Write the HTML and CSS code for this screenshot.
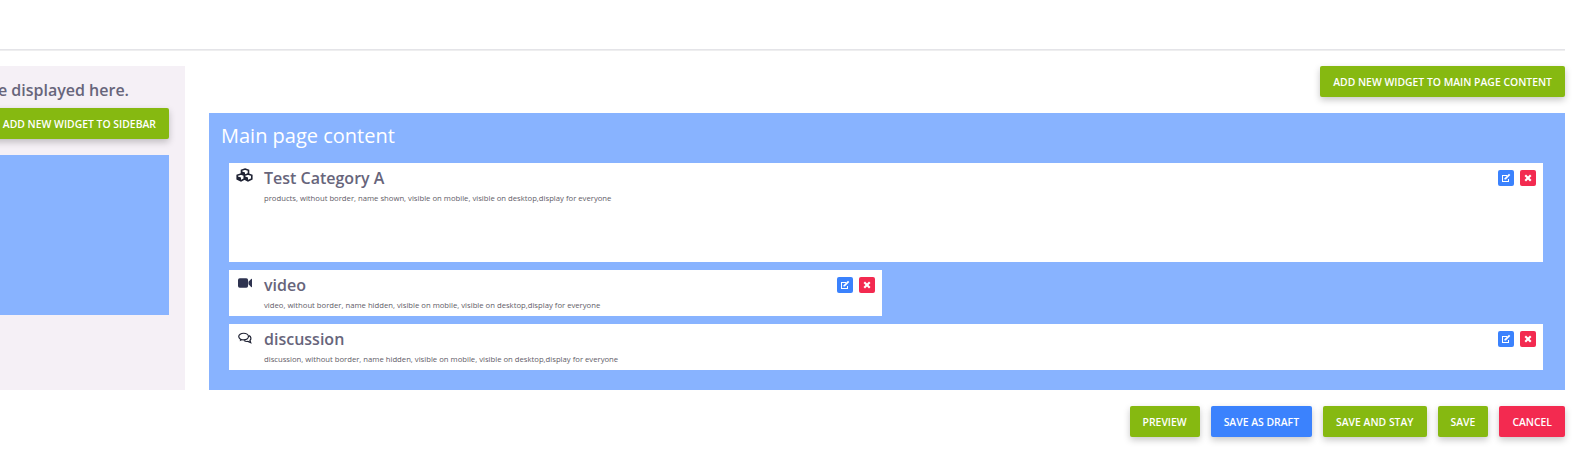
FILE: index.html
```html
<!DOCTYPE html>
<html lang="en">
<head>
  <meta charset="UTF-8">
  <title>Page widgets</title>
  <link rel="stylesheet" href="styles.css">
</head>
<body>
  <div class="page">
    <hr class="divider">

    <div class="columns">
      <!-- Sidebar, runs off the left edge -->
      <div class="sidebar">
        <p class="sidebar-note">Sidebar widgets will be displayed here.</p>
        <button class="btn btn-green">Add new widget to sidebar</button>
        <div class="sidebar-zone"></div>
      </div>

      <div class="main">
        <div class="main-top">
          <button class="btn btn-green">Add new widget to main page content</button>
        </div>
        <div class="main-zone">
          <h2>Main page content</h2>

          <div class="widget widget-tall">
            <svg class="widget-icon" viewBox="0 0 17 14"><g fill="#fff" stroke="#1f2233" stroke-width="1.600"><path d="M9 1 12.500 2.300V6L9 7.500 5.500 6V2.300z"/><path d="M5 6 8.500 7.300V11L5 12.800 1.200 11V7.300z"/><path d="M12 6 15.800 7.300V11L12 12.800 8.500 11V7.300z"/></g><g fill="#1f2233"><path d="M5.500 3.200 9 4.600V7.500L5.500 6z"/><path d="M1.200 8.200 5 9.600V12.800L1.200 11z"/><path d="M8.500 8.200 12 9.600V12.800L8.500 11z"/></g></svg>
            <div class="widget-body">
              <h3>Test Category A</h3>
              <p>products, without border, name shown, visible on mobile, visible on desktop,display for everyone</p>
            </div>
            <div class="widget-actions">
              <button class="icon-btn icon-edit"><svg viewBox="0 0 10 10"><path d="M1 2h5v1H2v5h5V6h1v3H1z" fill="#fff"/><path d="M3.500 5.200 8 .8l1.300 1.300L4.800 6.500H3.500z" fill="#fff"/></svg></button>
              <button class="icon-btn icon-delete"><svg viewBox="0 0 10 10"><path d="M3 1.500 5 3.500 7 1.500 8.500 3 6.500 5 8.500 7 7 8.500 5 6.500 3 8.500 1.500 7 3.500 5 1.500 3z" fill="#fff"/></svg></button>
            </div>
          </div>

          <div class="widget widget-half">
            <svg class="widget-icon icon-video" viewBox="0 0 16 11"><path d="M2 0h7.500a2 2 0 0 1 2 2v7a2 2 0 0 1-2 2H2a2 2 0 0 1-2-2V2a2 2 0 0 1 2-2zM12 4l3-3.200a.6.6 0 0 1 1 .4v8.600a.6.6 0 0 1-1 .4L12 7z" fill="#2e3350"/></svg>
            <div class="widget-body">
              <h3>video</h3>
              <p>video, without border, name hidden, visible on mobile, visible on desktop,display for everyone</p>
            </div>
            <div class="widget-actions">
              <button class="icon-btn icon-edit"><svg viewBox="0 0 10 10"><path d="M1 2h5v1H2v5h5V6h1v3H1z" fill="#fff"/><path d="M3.500 5.200 8 .8l1.300 1.300L4.800 6.500H3.500z" fill="#fff"/></svg></button>
              <button class="icon-btn icon-delete"><svg viewBox="0 0 10 10"><path d="M3 1.500 5 3.500 7 1.500 8.500 3 6.500 5 8.500 7 7 8.500 5 6.500 3 8.500 1.500 7 3.500 5 1.500 3z" fill="#fff"/></svg></button>
            </div>
          </div>

          <div class="widget">
            <svg class="widget-icon icon-comments" viewBox="0 0 15 12"><ellipse cx="6" cy="4.500" rx="5.200" ry="3.600" fill="none" stroke="#1f2233" stroke-width="1.300"/><path d="M2.500 7 1.800 9.500 5 8z" fill="#1f2233"/><path d="M11.800 3.500c2.200 1 2.800 3.600 1 5.200l.8 2.300-3-1.300c-1.500.2-3-.1-4-1" fill="none" stroke="#1f2233" stroke-width="1.300"/></svg>
            <div class="widget-body">
              <h3>discussion</h3>
              <p>discussion, without border, name hidden, visible on mobile, visible on desktop,display for everyone</p>
            </div>
            <div class="widget-actions">
              <button class="icon-btn icon-edit"><svg viewBox="0 0 10 10"><path d="M1 2h5v1H2v5h5V6h1v3H1z" fill="#fff"/><path d="M3.500 5.200 8 .8l1.300 1.300L4.800 6.500H3.500z" fill="#fff"/></svg></button>
              <button class="icon-btn icon-delete"><svg viewBox="0 0 10 10"><path d="M3 1.500 5 3.500 7 1.500 8.500 3 6.500 5 8.500 7 7 8.500 5 6.500 3 8.500 1.500 7 3.500 5 1.500 3z" fill="#fff"/></svg></button>
            </div>
          </div>
        </div>
      </div>
    </div>

    <div class="footer-actions">
      <button class="btn btn-green">Preview</button>
      <button class="btn btn-blue">Save as draft</button>
      <button class="btn btn-green">Save and stay</button>
      <button class="btn btn-green">Save</button>
      <button class="btn btn-red">Cancel</button>
    </div>
  </div>
</body>
</html>
```

FILE: styles.css
```css
/* Basic styling */
html, body {
  margin: 0;
  height: 100%;
  overflow: hidden;
  background: #fff;
}
body {
  font-family: "Open Sans", sans-serif;
  color: #67657b;
}
.page {
  padding: 48px 17px 0 0;
}
.divider {
  margin: 1px 0 15px;
  border: none;
  border-top: 1px solid #e4e4e8;
  border-bottom: 1px solid #eeeeef;
}

/* Buttons */
.btn {
  height: 31px;
  padding: 0 13px;
  border: none;
  border-radius: 2px;
  color: #fff;
  font-family: inherit;
  font-size: 10.4px;
  font-weight: 600;
  text-transform: uppercase;
  white-space: nowrap;
  box-shadow: 0 3px 7px rgba(0, 0, 0, 0.22);
}
.btn-green { background-color: #86b911; }
.btn-blue { background-color: #3b82fd; }
.btn-red { background-color: #f32a50; }

/* Layout */
.columns {
  display: flex;
  gap: 24px;
}

/* Sidebar */
.sidebar {
  flex: none;
  box-sizing: border-box;
  width: 500px;
  height: 324px;
  margin-left: -315px;
  padding: 12px 16px 0;
  background-color: #f5f0f6;
  display: flex;
  flex-direction: column;
  align-items: flex-end;
}
.sidebar-note {
  margin: 0 40px 6px 0;
  font-size: 16px;
  font-weight: 600;
  line-height: 24px;
  white-space: nowrap;
}
.sidebar .btn {
  margin-bottom: 16px;
}
.sidebar-zone {
  align-self: stretch;
  height: 160px;
  background-color: #88b3ff;
}

/* Main column */
.main {
  flex: 1;
  min-width: 0;
}
.main-top {
  display: flex;
  justify-content: flex-end;
  margin-bottom: 16px;
}
.main-zone {
  box-sizing: border-box;
  height: 277px;
  padding: 8px 22px 0 20px;
  background-color: #88b3ff;
  display: flex;
  flex-direction: column;
  align-items: flex-start;
}
.main-zone h2 {
  margin: 0 0 13px -8px;
  color: #fff;
  font-size: 20px;
  font-weight: 400;
  line-height: 29px;
}

/* Widgets */
.widget {
  box-sizing: border-box;
  align-self: stretch;
  height: 46px;
  margin-bottom: 8px;
  padding: 5px 7px 0 7px;
  background-color: #fff;
  display: flex;
}
.widget-tall {
  height: 99px;
}
.widget-half {
  align-self: flex-start;
  width: 653px;
}
.widget-icon {
  flex: none;
  width: 17px;
  height: 14px;
  margin-right: 11px;
}
.icon-video {
  width: 14px;
  height: 10px;
  margin: 3px 12px 0 2px;
}
.icon-comments {
  width: 14px;
  height: 12px;
  margin: 3px 12px 0 2px;
}
.widget-body {
  flex: 1;
  min-width: 0;
}
.widget-body h3 {
  margin: 0 0 4px;
  font-size: 16px;
  font-weight: 600;
  line-height: 20px;
}
.widget-body p {
  margin: 0;
  color: #5f5d68;
  font-size: 7.7px;
  line-height: 12px;
}
.widget-actions {
  flex: none;
  display: flex;
  gap: 6px;
  padding-top: 2px;
}
.icon-btn {
  width: 16px;
  height: 16px;
  padding: 3px;
  border: none;
  border-radius: 2px;
  display: flex;
}
.icon-btn svg {
  width: 10px;
  height: 10px;
}
.icon-edit { background-color: #3b82fd; }
.icon-delete { background-color: #f32a50; }

/* Bottom row of actions */
.footer-actions {
  display: flex;
  justify-content: flex-end;
  gap: 11px;
  margin-top: 16px;
}
```
